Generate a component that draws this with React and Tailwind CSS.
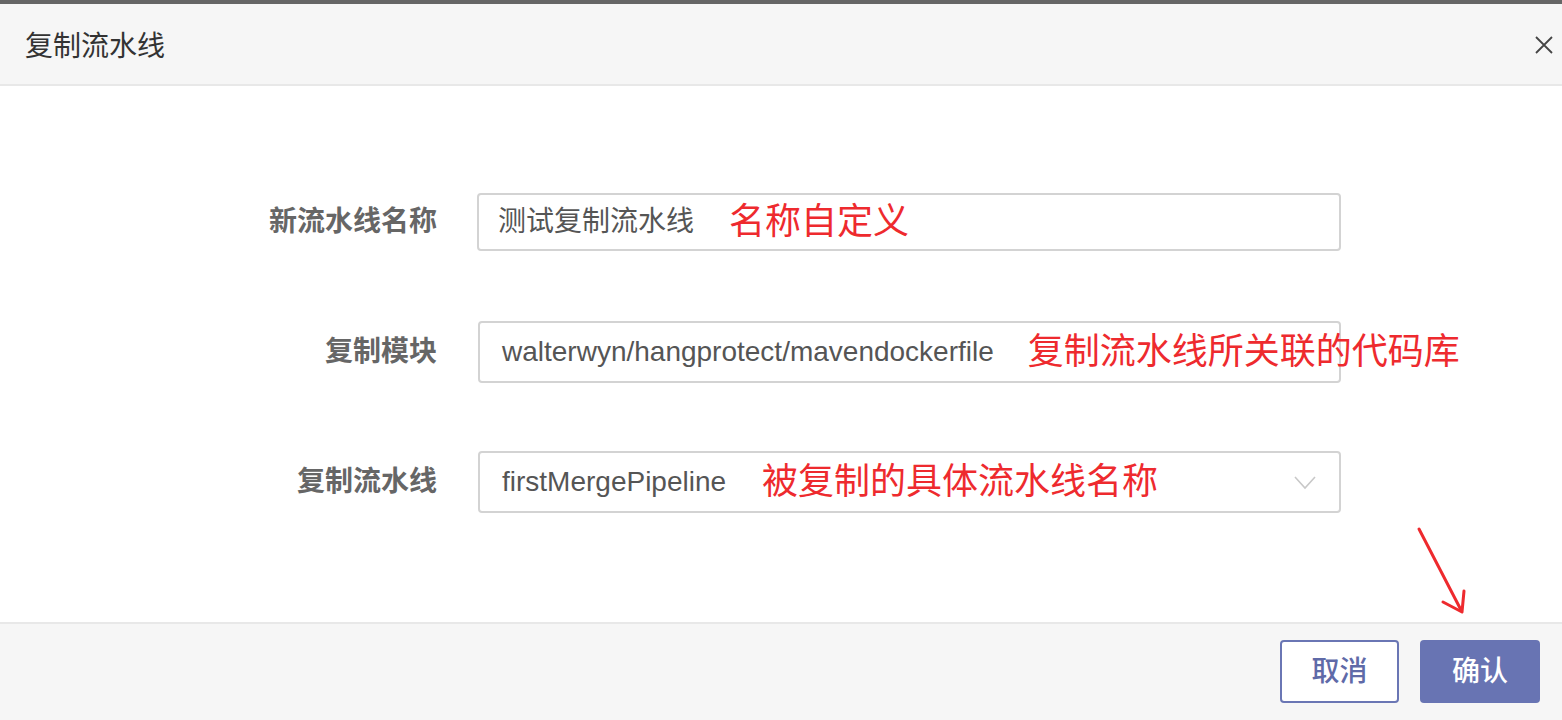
const rows = [
  {
    label: '新流水线名称',
    value: '测试复制流水线',
    note: '名称自定义',
    box: 'ml-[40px] w-[864px] h-[58px] pl-[19px]',
    gap: 'ml-[35px]',
  },
  {
    label: '复制模块',
    value: 'walterwyn/hangprotect/mavendockerfile',
    note: '复制流水线所关联的代码库',
    box: 'ml-[41px] w-[863px] h-[62px] pl-[22px]',
    gap: 'ml-[34px]',
  },
  {
    label: '复制流水线',
    value: 'firstMergePipeline',
    note: '被复制的具体流水线名称',
    box: 'ml-[41px] w-[863px] h-[62px] pl-[22px]',
    gap: 'ml-[36px]',
    select: true,
  },
]

function Row({ row, className }) {
  return (
    <div className={`flex items-center ${className}`}>
      <div className="w-[437px] text-right text-[28px] font-bold text-[#666]">{row.label}</div>
      <div
        className={`relative flex items-center rounded-[4px] border-2 border-[#d3d3d3] bg-white whitespace-nowrap ${row.box}`}
      >
        <span className="text-[28px] text-[#555]">{row.value}</span>
        <span className={`text-[36px] leading-none text-[#ee2a2e] ${row.gap}`}>{row.note}</span>
        {row.select && (
          <svg className="absolute right-[23px] top-[23px]" width="22" height="14" viewBox="0 0 22 14">
            <path d="M1 1 L11 12 L21 1" fill="none" stroke="#c8c8c8" strokeWidth="1.6" />
          </svg>
        )}
      </div>
    </div>
  )
}

export default function App() {
  return (
    <div className="relative flex h-[720px] w-[1562px] flex-col overflow-hidden bg-white font-['Liberation_Sans','Noto_Sans_CJK_SC',sans-serif]">
      {/* top edge */}
      <div className="h-[4px] bg-[#666]" />

      {/* Header */}
      <div className="flex h-[82px] items-center justify-between border-b-2 border-[#e8e8e8] bg-[#f6f6f6] pl-[25px] pr-[7px]">
        <h1 className="pt-[5px] text-[28px] text-[#333]">复制流水线</h1>
        <svg width="20" height="20" viewBox="0 0 20 20" className="mr-[1px] mt-[2px]">
          <path d="M2 2 L18 18 M18 2 L2 18" stroke="#444" strokeWidth="1.8" fill="none" />
        </svg>
      </div>

      {/* Form */}
      <div className="flex-1 pt-[107px]">
        <Row row={rows[0]} />
        <Row row={rows[1]} className="mt-[70px]" />
        <Row row={rows[2]} className="mt-[68px]" />
      </div>

      {/* Footer */}
      <div className="flex h-[98px] items-start justify-end gap-[21px] border-t-2 border-[#e8e8e8] bg-[#f6f6f6] pr-[22px] pt-[16px]">
        <button className="h-[63px] w-[119px] rounded-[4px] border-2 border-[#6a76b4] bg-white text-[28px] font-medium text-[#5f6aa8]">
          取消
        </button>
        <button className="h-[63px] w-[120px] rounded-[4px] bg-[#6874b3] text-[28px] font-medium text-white">
          确认
        </button>
      </div>

      {/* annotation arrow */}
      <svg className="absolute left-[1410px] top-[520px]" width="70" height="100" viewBox="1410 520 70 100">
        <path d="M1419 529 L1461 610" stroke="#ee2a2e" strokeWidth="3" fill="none" strokeLinecap="round" />
        <path d="M1443 602 L1462 612 L1464 591" stroke="#ee2a2e" strokeWidth="3" fill="none" strokeLinecap="round" strokeLinejoin="round" />
      </svg>
    </div>
  )
}
